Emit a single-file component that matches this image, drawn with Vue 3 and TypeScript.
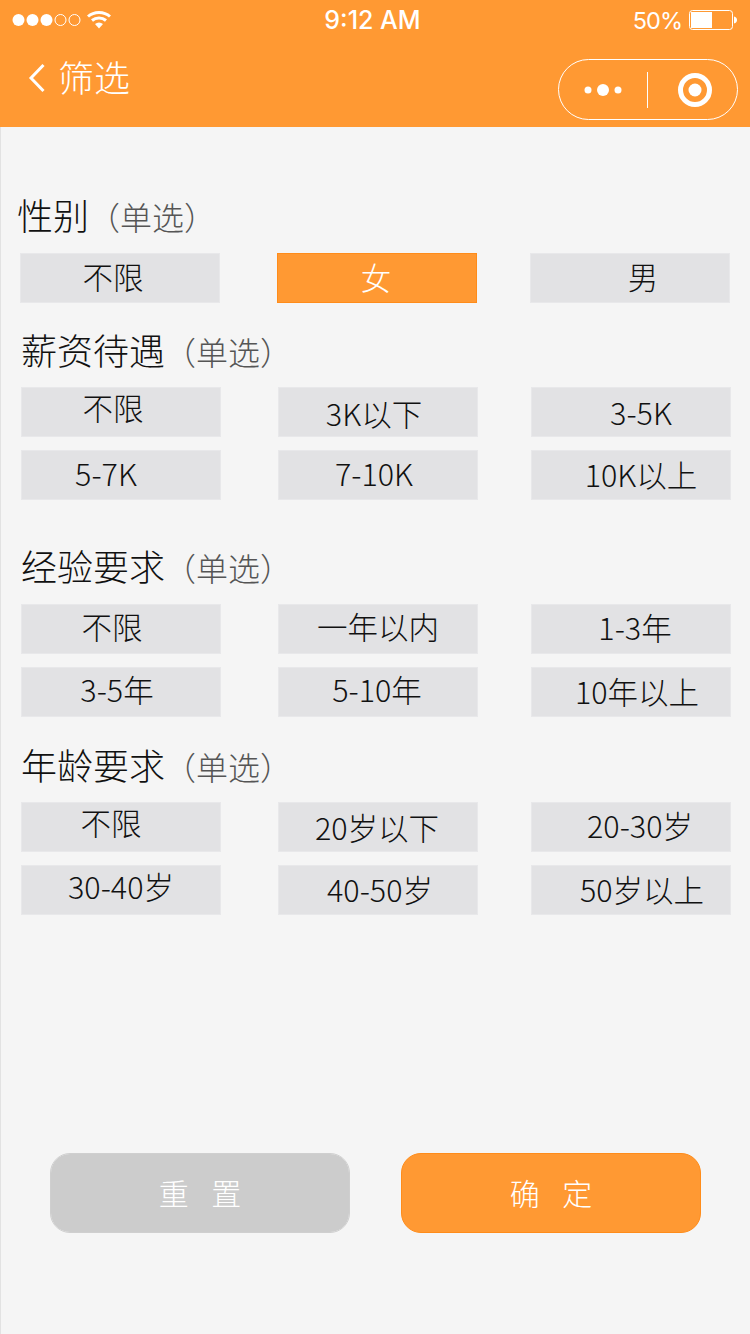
<script setup lang="ts">
interface Option {
  label: string
  dx: number
  dy: number
  active?: boolean
}

interface Group {
  name: string
  title: string
  rows: Option[]
}

const groups: Group[] = [
  {
    name: 'gender',
    title: '性别',
    rows: [
      { label: '不限', dx: -7, dy: 0 },
      { label: '女', dx: -1, dy: 1, active: true },
      { label: '男', dx: 13, dy: 0 },
    ],
  },
  {
    name: 'salary',
    title: '薪资待遇',
    rows: [
      { label: '不限', dx: -8, dy: -3 },
      { label: '3K以下', dx: -4, dy: 3 },
      { label: '3-5K', dx: 10, dy: 2 },
      { label: '5-7K', dx: -15, dy: 0 },
      { label: '7-10K', dx: -4, dy: 0 },
      { label: '10K以上', dx: 10, dy: 1 },
    ],
  },
  {
    name: 'exp',
    title: '经验要求',
    rows: [
      { label: '不限', dx: -9, dy: -1 },
      { label: '一年以内', dx: 0, dy: -1 },
      { label: '1-3年', dx: 4, dy: 0 },
      { label: '3-5年', dx: -4, dy: -1 },
      { label: '5-10年', dx: -1, dy: -1 },
      { label: '10年以上', dx: 6, dy: 1 },
    ],
  },
  {
    name: 'age',
    title: '年龄要求',
    rows: [
      { label: '不限', dx: -10, dy: -3 },
      { label: '20岁以下', dx: -1, dy: 2 },
      { label: '20-30岁', dx: 9, dy: 0 },
      { label: '30-40岁', dx: 0, dy: -2 },
      { label: '40-50岁', dx: 2, dy: 1 },
      { label: '50岁以上', dx: 11, dy: 1 },
    ],
  },
]
</script>

<template>
  <div class="page">
    <header class="top">
      <div class="status">
        <div class="status-left">
          <svg width="72" height="14" viewBox="0 0 72 14">
            <circle cx="6.5" cy="7" r="6" fill="#fff" />
            <circle cx="20.5" cy="7" r="6" fill="#fff" />
            <circle cx="34.5" cy="7" r="6" fill="#fff" />
            <circle cx="48.5" cy="7" r="5.5" fill="none" stroke="#fff" stroke-width="1" />
            <circle cx="62.5" cy="7" r="5.5" fill="none" stroke="#fff" stroke-width="1" />
          </svg>
          <svg class="wifi" width="24" height="19" viewBox="0 0 24 19">
            <path d="M1 6.5C7 1 17 1 23 6.5" fill="none" stroke="#fff" stroke-width="3" />
            <path d="M5 10.5C9 7 15 7 19 10.5" fill="none" stroke="#fff" stroke-width="3" />
            <path d="M8 14C10.500 12 13.500 12 16 14L12 18.500Z" fill="#fff" />
          </svg>
        </div>
        <div class="time">9:12 AM</div>
        <div class="status-right">
          <span>50%</span>
          <svg width="49" height="20" viewBox="0 0 49 20">
            <rect x="0.500" y="0.500" width="43" height="19" rx="3" fill="none" stroke="#fff" />
            <rect x="2" y="2" width="21" height="16" fill="#fff" />
            <path d="M45 6.500C47 7 48 8 48 10C48 12 47 13 45 13.500Z" fill="#fff" />
          </svg>
        </div>
      </div>
      <div class="nav">
        <svg class="back" width="18" height="30" viewBox="0 0 18 30">
          <path d="M15.500 2L3 15L15.500 28" fill="none" stroke="#fff" stroke-width="3" />
        </svg>
        <span class="nav-title">筛选</span>
        <div class="capsule">
          <svg width="40" height="14" viewBox="0 0 40 14">
            <circle cx="5" cy="7" r="3.500" fill="#fff" />
            <circle cx="20" cy="7" r="6" fill="#fff" />
            <circle cx="35" cy="7" r="3.500" fill="#fff" />
          </svg>
          <i class="capsule-line"></i>
          <svg width="36" height="36" viewBox="0 0 36 36">
            <circle cx="18" cy="18" r="14.500" fill="none" stroke="#fff" stroke-width="5" />
            <circle cx="18" cy="18" r="6.500" fill="#fff" />
          </svg>
        </div>
      </div>
    </header>

    <main class="main">
      <section v-for="group in groups" :key="group.name" class="group" :class="group.name">
        <h2 class="title">{{ group.title }}<small>（单选）</small></h2>
        <div class="options">
          <div
            v-for="opt in group.rows"
            :key="opt.label"
            class="option"
            :class="{ active: opt.active }"
          >
            <span :style="{ transform: `translate(${opt.dx}px, ${opt.dy}px)` }">{{ opt.label }}</span>
          </div>
        </div>
      </section>

      <div class="actions">
        <button class="btn reset">重 置</button>
        <button class="btn confirm">确 定</button>
      </div>
    </main>
  </div>
</template>

<style>
html,
body {
  margin: 0;
  background: #f5f5f5;
}
</style>

<style scoped>
.page {
  width: 750px;
  height: 1334px;
  overflow: hidden;
  font-family: "Noto Sans CJK SC", "Noto Sans", sans-serif;
  font-weight: 300;
  color: #111;
  background: #f5f5f5;
}

.top {
  height: 127px;
  background: #ff9933;
  color: #fff;
}

.status {
  height: 40px;
  display: flex;
  align-items: center;
  justify-content: space-between;
  padding: 0 12px;
  font-family: Inter, "Liberation Sans", sans-serif;
  font-size: 25px;
  font-weight: 400;
  box-sizing: border-box;
}

.status-left {
  width: 212px;
  display: flex;
  align-items: center;
}

.wifi {
  margin-left: 3px;
  margin-top: -2px;
}

.time {
  font-weight: 500;
  margin-left: -5px;
}

.status-right {
  width: 212px;
  display: flex;
  align-items: center;
  justify-content: flex-end;
  gap: 7px;
  font-size: 23.5px;
  letter-spacing: -1px;
}

.nav {
  height: 87px;
  display: flex;
  align-items: flex-start;
  padding: 0 12px 0 28px;
  box-sizing: border-box;
}

.back {
  margin-top: 23px;
}

.nav-title {
  margin-left: 12px;
  font-size: 36px;
  line-height: 50px;
  margin-top: 11px;
}

.capsule {
  margin-left: auto;
  margin-top: 19px;
  width: 180px;
  height: 61px;
  box-sizing: border-box;
  border: 1px solid #fff;
  border-radius: 31px;
  display: flex;
  align-items: center;
  padding-left: 24px;
}

.capsule-line {
  width: 1px;
  height: 36px;
  margin: 0 29px 0 24px;
  background: #fff;
}

.main {
  height: 1207px;
  box-sizing: border-box;
  border-left: 1px solid #e2e2e2;
  padding-top: 65px;
}

.group {
  padding-left: 20px;
}

.group.gender {
  padding-left: 19px;
}

.group.salary {
  margin-top: 24px;
}

.group.exp {
  margin-top: 43px;
}

.group.age {
  margin-top: 25px;
}

.title {
  margin: 0;
  height: 50px;
  line-height: 44px;
  font-size: 36px;
  font-weight: 300;
  color: #111;
  white-space: nowrap;
}

.gender .title {
  margin-left: -3px;
}

.title small {
  font-size: 32px;
  color: #555;
  margin-left: -1px;
}

.options {
  margin-top: 10px;
  display: grid;
  grid-template-columns: 257px 253px 200px;
  row-gap: 13px;
}

.gender .options {
  margin-top: 11px;
}

.exp .options {
  margin-top: 11px;
}

.option {
  width: 200px;
  height: 50px;
  box-sizing: border-box;
  border: 1px solid #e8e8ea;
  padding-bottom: 5px;
  background: #e2e2e4;
  display: flex;
  align-items: center;
  justify-content: center;
  font-size: 30.5px;
  color: #111;
}

.option span {
  display: block;
  white-space: nowrap;
}

.option.active {
  background: #ff9933;
  border-color: #ff8c1a;
  color: #fff;
}

.actions {
  margin-top: 238px;
  padding-left: 49px;
  display: flex;
  gap: 51px;
}

.btn {
  width: 300px;
  height: 80px;
  border-radius: 20px;
  box-sizing: border-box;
  font-family: inherit;
  font-weight: 300;
  font-size: 30px;
  color: #fff;
  word-spacing: 16px;
  padding: 0 0 3px;
}

.reset {
  background: #cccccc;
  border: 1px solid #f8f8f8;
  outline: 1px solid #cfcfcf;
  outline-offset: -1px;
}

.confirm {
  background: #ff9933;
  border: 1px solid #ff8c1a;
}
</style>
